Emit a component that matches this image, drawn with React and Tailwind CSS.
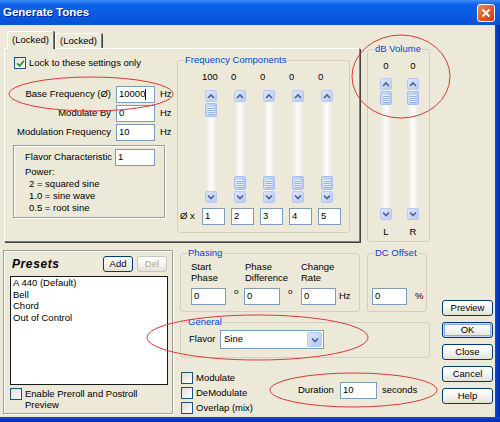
import React from "react";

function Chevron({ up }) {
  return (
    <svg width="8" height="6" viewBox="0 0 8 6">
      <polyline
        points={up ? "1,5 4,2 7,5" : "1,1.5 4,4.5 7,1.5"}
        fill="none"
        stroke="#4D6185"
        strokeWidth="1.6"
      />
    </svg>
  );
}

function ArrowBtn({ up }) {
  return (
    <div className="h-[12px] w-[12px] shrink-0 flex items-center justify-center rounded-[2px] border border-[#B7C9F3] bg-linear-to-br from-[#DCE6FE] to-[#B9CCF9]">
      <Chevron up={up} />
    </div>
  );
}

function Thumb() {
  return (
    <div className="h-[14px] w-[12px] shrink-0 flex flex-col items-center justify-center gap-[1px] rounded-[2px] border border-[#A9BEF0] bg-linear-to-r from-[#CCDAFD] to-[#B7CAF7]">
      <div className="w-[6px] h-[1px] bg-[#EEF3FF] shadow-[0_1px_0_#93ADE9]" />
      <div className="w-[6px] h-[1px] bg-[#EEF3FF] shadow-[0_1px_0_#93ADE9]" />
      <div className="w-[6px] h-[1px] bg-[#EEF3FF] shadow-[0_1px_0_#93ADE9]" />
      <div className="w-[6px] h-[1px] bg-[#EEF3FF] shadow-[0_1px_0_#93ADE9]" />
    </div>
  );
}

// vertical scroll bar, thumb either right under the up arrow or right above the down arrow
function VScroll({ className, thumbTop }) {
  return (
    <div
      className={`w-[12px] flex flex-col bg-linear-to-r from-[#E8E7DF] via-[#FDFDFB] to-[#E8E7DF] ${className}`}
    >
      <ArrowBtn up />
      {thumbTop && (
        <div className="mt-[1px]">
          <Thumb />
        </div>
      )}
      <div className="flex-1" />
      {!thumbTop && (
        <div className="mb-[1px]">
          <Thumb />
        </div>
      )}
      <ArrowBtn />
    </div>
  );
}

function Check({ checked }) {
  return (
    <div className="w-[12px] h-[12px] shrink-0 border border-[#1C5180] bg-linear-to-br from-[#DCDCD7] to-white flex items-center justify-center">
      {checked && (
        <svg width="9" height="9" viewBox="0 0 9 9">
          <path d="M1.2 4.3 L3.6 6.8 L7.9 1.8" fill="none" stroke="#21A121" strokeWidth="1.8" />
        </svg>
      )}
    </div>
  );
}

function Field({ value, className = "", cursor }) {
  return (
    <div
      className={`h-[17px] shrink-0 border border-[#7F9DB9] bg-white flex items-center pl-[2px] ${className}`}
    >
      {value}
      {cursor && <span className="w-[1px] h-[11px] bg-black" />}
    </div>
  );
}

function Btn({ label, isDefault, disabled, className = "" }) {
  return (
    <button
      className={`h-[16px] flex items-center justify-center rounded-[3px] border bg-linear-to-b from-white via-[#F5F4EF] to-[#E3E1D7] ${
        disabled ? "border-[#C9C7BA] text-[#ACA899]" : "border-[#003C74]"
      } ${isDefault ? "shadow-[inset_0_0_0_1px_#C2D6FA,inset_0_0_0_2px_#8DAAE8]" : ""} ${className}`}
    >
      {label}
    </button>
  );
}

function Group({ title, className = "", children }) {
  return (
    <div className={`border border-[#D0D0BF] rounded-[3px] flex flex-col ${className}`}>
      <span className="-mt-[7px] ml-[6px] px-[1px] w-fit h-[12px] leading-[12px] bg-[#ECE9D8] text-[#0046D5]">
        {title}
      </span>
      {children}
    </div>
  );
}

function TopRow() {
  return (
    <div className="flex h-[218px]">
      {/* tab control */}
      <div className="ml-[4px] mt-[6px] w-[356px] flex flex-col">
        <div className="flex items-end h-[17px] pl-[3px]">
          <div className="relative z-10 -mb-[1px] h-[18px] w-[47px] bg-[#ECE9D8] border-t border-l border-r border-t-white border-l-white border-r-[#808080] rounded-t-[2px] shadow-[1px_0_0_#404040] flex items-center justify-center">
            (Locked)
          </div>
          <div className="ml-[1px] h-[15px] w-[47px] border-t border-l border-r border-t-white border-l-white border-r-[#808080] rounded-t-[2px] shadow-[1px_0_0_#404040] flex items-center justify-center">
            (Locked)
          </div>
        </div>
        <div className="h-[194px] border border-t-white border-l-white border-r-[#808080] border-b-[#808080] shadow-[1px_1px_0_#404040] flex">
          {/* left fields */}
          <div className="w-[172px] flex flex-col">
            <div className="flex items-center mt-[8px] ml-[9px] h-[12px]">
              <Check checked />
              <span className="ml-[3px]">Lock to these settings only</span>
            </div>
            <div className="mt-[17px] flex flex-col gap-[2px]">
              <div className="flex items-center h-[17px]">
                <span className="w-[106px] text-right">Base Frequency (Ø)</span>
                <Field className="ml-[5px] w-[39px]" value="10000" cursor />
                <span className="ml-[5px]">Hz</span>
              </div>
              <div className="flex items-center h-[17px]">
                <span className="w-[106px] text-right">Modulate By</span>
                <Field className="ml-[5px] w-[39px]" value="0" />
                <span className="ml-[5px]">Hz</span>
              </div>
              <div className="flex items-center h-[17px]">
                <span className="w-[106px] text-right">Modulation Frequency</span>
                <Field className="ml-[5px] w-[39px]" value="10" />
                <span className="ml-[5px]">Hz</span>
              </div>
            </div>
            <div className="mt-[4px] ml-[8px] w-[152px] h-[73px] border border-[#9D9D9D] shadow-[inset_1px_1px_0_#fff,1px_1px_0_#fff] flex flex-col">
              <div className="flex items-center mt-[3px] ml-[11px]">
                <span className="w-[90px]">Flavor Characteristic</span>
                <Field className="w-[40px]" value="1" />
              </div>
              <div className="ml-[11px] leading-[12px]">
                <div>Power:</div>
                <div className="pl-[4px]">2 = squared sine</div>
                <div className="pl-[4px]">1.0 = sine wave</div>
                <div className="pl-[4px]">0.5 = root sine</div>
              </div>
            </div>
          </div>

          {/* frequency components */}
          <Group title="Frequency Components" className="mt-[11px] w-[173px] h-[173px]">
            <div className="flex mt-[5px] h-[11px] leading-[11px] pl-[24px]">
              {["100", "0", "0", "0", "0"].map((n, i) => (
                <span key={i} className="w-[29px]">
                  {n}
                </span>
              ))}
            </div>
            <div className="flex mt-[8px] pl-[24px]">
              {[true, false, false, false, false].map((top, i) => (
                <div key={i} className="w-[29px]">
                  <VScroll className="ml-[3px] h-[113px]" thumbTop={top} />
                </div>
              ))}
            </div>
            <div className="flex items-center mt-[5px] pl-[2px]">
              <span className="w-[22px]">Ø x</span>
              {["1", "2", "3", "4", "5"].map((n) => (
                <Field key={n} className="w-[23px] mr-[6px]" value={n} />
              ))}
            </div>
          </Group>
        </div>
      </div>

      {/* dB volume */}
      <Group title="dB Volume" className="ml-[7px] mt-[24px] w-[63px] h-[193px]">
        <div className="flex mt-[5px] pl-[12px] gap-[15px] leading-[11px]">
          <span className="w-[12px] text-center">0</span>
          <span className="w-[12px] text-center">0</span>
        </div>
        <div className="flex mt-[7px] pl-[12px] gap-[15px]">
          <VScroll className="h-[142px]" thumbTop />
          <VScroll className="h-[142px]" thumbTop />
        </div>
        <div className="flex mt-[6px] pl-[12px] gap-[15px] leading-[11px]">
          <span className="w-[12px] text-center">L</span>
          <span className="w-[12px] text-center">R</span>
        </div>
      </Group>
    </div>
  );
}

function BottomRow() {
  return (
    <div className="flex h-[174px]">
      {/* presets */}
      <div className="ml-[3px] mt-[7px] w-[170px] h-[164px] border border-[#9D9D9D] shadow-[inset_1px_1px_0_#fff,1px_1px_0_#fff] flex flex-col">
        <div className="flex items-center mt-[6px] h-[14px]">
          <span className="ml-[8px] text-[12px] font-bold italic tracking-[0.6px]">Presets</span>
          <Btn label="Add" className="ml-auto w-[30px] h-[14px]" />
          <Btn label="Del" disabled className="ml-[4px] mr-[5px] w-[30px] h-[14px]" />
        </div>
        <div className="ml-[6px] mt-[5px] w-[158px] h-[109px] border border-[#1A1A1A] bg-white leading-[11.5px] pl-[2px]">
          <div>A 440 (Default)</div>
          <div>Bell</div>
          <div>Chord</div>
          <div>Out of Control</div>
        </div>
        <div className="flex mt-[3px] ml-[6px]">
          <Check />
          <div className="ml-[3px] leading-[11px] -mt-[0.5px]">
            <div>Enable Preroll and Postroll</div>
            <div>Preview</div>
          </div>
        </div>
      </div>

      {/* middle */}
      <div className="ml-[7px] w-[250px] flex flex-col">
        <div className="flex mt-[10px]">
          <Group title="Phasing" className="w-[180px] h-[59px]">
            <div className="flex mt-[2px] leading-[11px] pl-[10px]">
              <div className="w-[53px]">
                Start
                <br />
                Phase
              </div>
              <div className="w-[57px] pl-[1px]">
                Phase
                <br />
                Difference
              </div>
              <div>
                Change
                <br />
                Rate
              </div>
            </div>
            <div className="flex items-center mt-[5px] pl-[10px]">
              <div className="w-[53px] flex">
                <Field className="w-[35px]" value="0" />
                <span className="ml-[8px] text-[8px] leading-[8px]">o</span>
              </div>
              <div className="w-[57px] flex">
                <Field className="w-[36px]" value="0" />
                <span className="ml-[8px] text-[8px] leading-[8px]">o</span>
              </div>
              <div className="flex items-center">
                <Field className="w-[35px]" value="0" />
                <span className="ml-[3px]">Hz</span>
              </div>
            </div>
          </Group>
          <Group title="DC Offset" className="ml-[7px] w-[60px] h-[59px]">
            <div className="flex items-center mt-[29px] ml-[4px]">
              <Field className="w-[35px]" value="0" />
              <span className="ml-[8px]">%</span>
            </div>
          </Group>
        </div>

        <Group title="General" className="mt-[10px] w-[250px] h-[36px]">
          <div className="flex items-center mt-[2px] pl-[8px]">
            <span className="w-[31px]">Flavor</span>
            <div className="w-[104px] h-[19px] border border-[#7F9DB9] bg-white flex items-center pl-[3px]">
              Sine
              <div className="ml-auto mr-[1px] w-[15px] h-[15px] rounded-[2px] border border-[#B7C9F3] bg-linear-to-br from-[#DCE6FE] to-[#B1C7F9] flex items-center justify-center">
                <Chevron />
              </div>
            </div>
          </div>
        </Group>

        <div className="flex mt-[14px]">
          <div className="ml-[1px] w-[117px] flex flex-col">
            {["Modulate", "DeModulate", "Overlap (mix)"].map((t) => (
              <div key={t} className="flex items-start h-[15px]">
                <Check />
                <span className="ml-[3px] leading-[12px]">{t}</span>
              </div>
            ))}
          </div>
          <div className="flex items-center mt-[10px] h-[16px]">
            <span>Duration</span>
            <Field className="ml-[6px] w-[37px] h-[16px]" value="10" />
            <span className="ml-[5px]">seconds</span>
          </div>
        </div>
      </div>

      {/* buttons */}
      <div className="ml-[12px] mt-[57px] w-[51px] flex flex-col gap-[6px]">
        <Btn label="Preview" />
        <Btn label="OK" isDefault />
        <Btn label="Close" />
        <Btn label="Cancel" />
        <Btn label="Help" />
      </div>
    </div>
  );
}

export default function App() {
  return (
    <div className="relative w-[500px] h-[422px] overflow-hidden bg-[#ECE9D8] text-[9.5px] text-black font-['Liberation_Sans',Arial,sans-serif] flex flex-col">
      {/* title bar */}
      <div className="h-[25px] shrink-0 flex items-center bg-[linear-gradient(to_bottom,#3E8EF7_0%,#0E62E9_18%,#0A5ADF_60%,#0752D6_100%)]">
        <span className="ml-[3px] text-white font-bold text-[11.5px] [text-shadow:1px_1px_0_#0A1E8C]">
          Generate Tones
        </span>
        <div className="ml-auto mr-[5px] w-[18px] h-[18px] rounded-[3px] border border-white bg-linear-to-br from-[#EE8A62] via-[#E15A2E] to-[#C8400F] flex items-center justify-center">
          <svg width="10" height="10" viewBox="0 0 10 10">
            <path d="M1.5 1.5 L8.5 8.5 M8.5 1.5 L1.5 8.5" stroke="white" strokeWidth="2" />
          </svg>
        </div>
      </div>

      <div className="flex h-[392px]">
        <div className="w-[495px] flex flex-col">
          <TopRow />
          <BottomRow />
        </div>
        <div className="w-[5px] bg-linear-to-r from-[#0B4BE0] to-[#0728A8]" />
      </div>
      <div className="h-[5px] bg-linear-to-b from-[#0B4BE0] to-[#0728A8]" />

      {/* red annotation marks over the screenshot */}
      <svg className="absolute inset-0 pointer-events-none" width="500" height="422">
        <g fill="none" stroke="#D93A36" strokeWidth="1">
          <ellipse cx="91" cy="94" rx="82" ry="17" />
          <ellipse cx="401" cy="76.5" rx="49" ry="41.5" />
          <ellipse cx="257.5" cy="337.5" rx="110.5" ry="22.5" />
          <ellipse cx="353.5" cy="390" rx="83.5" ry="17" />
        </g>
      </svg>
    </div>
  );
}
